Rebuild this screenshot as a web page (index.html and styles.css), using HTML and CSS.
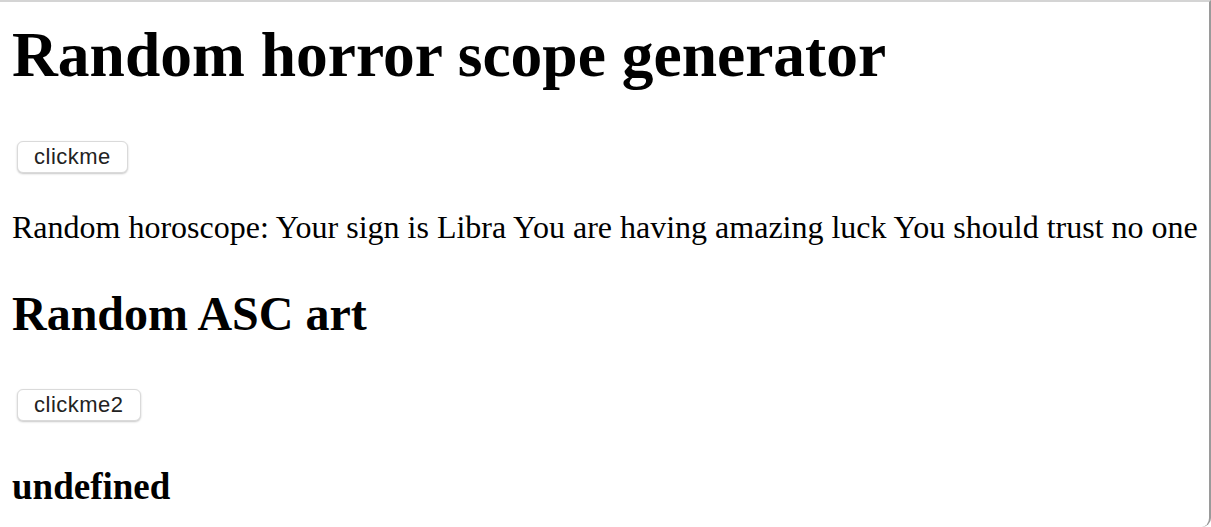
FILE: index.html
```html
<!DOCTYPE html>
<html>
<head>
<meta charset="utf-8">
<link rel="stylesheet" href="styles.css">
</head>
<body>
<div class="frame">
  <h1 class="title">Random horror scope generator</h1>
  <div class="btn-row"><button class="btn">clickme</button></div>
  <p class="result">Random horoscope: Your sign is Libra You are having amazing luck You should trust no one</p>
  <h2 class="subtitle">Random ASC art</h2>
  <div class="btn-row btn-row-2"><button class="btn">clickme2</button></div>
  <h3 class="art">undefined</h3>
</div>
</body>
</html>
```

FILE: styles.css
```css
html, body {
  margin: 0;
  padding: 0;
  background: #ffffff;
  overflow: hidden;
}

.frame {
  box-sizing: border-box;
  width: 1211px;
  height: 527px;
  border-top: 2px solid #d4d4d4;
  border-right: 2px solid #9a9a9a;
  border-bottom-right-radius: 9px;
  padding-left: 12px;
  font-family: "Liberation Serif", "Times New Roman", serif;
  color: #000;
  overflow: hidden;
}

.title {
  margin: 15.5px 0 0 0;
  font-size: 63.5px;
  line-height: 1.15;
  font-weight: bold;
  white-space: nowrap;
}

.btn-row {
  margin-top: 50px;
  padding-left: 5px;
  height: 32px;
}

.btn-row-2 {
  margin-top: 48px;
}

.btn {
  box-sizing: border-box;
  height: 32px;
  padding: 0 16px;
  font-family: "Liberation Sans", Arial, sans-serif;
  font-size: 22px;
  letter-spacing: 0.5px;
  color: #222;
  background: #fff;
  border: 1px solid #dadada;
  border-radius: 6px;
  box-shadow: 0 1px 2px rgba(0,0,0,0.22);
}

.result {
  margin: 36.8px 0 0 0;
  font-size: 32px;
  line-height: 1.15;
  white-space: nowrap;
}

.subtitle {
  margin: 39.6px 0 0 0;
  font-size: 48px;
  line-height: 1.15;
  font-weight: bold;
}

.art {
  margin: 45.5px 0 0 0;
  font-size: 37px;
  line-height: 1.15;
  font-weight: bold;
}
```
